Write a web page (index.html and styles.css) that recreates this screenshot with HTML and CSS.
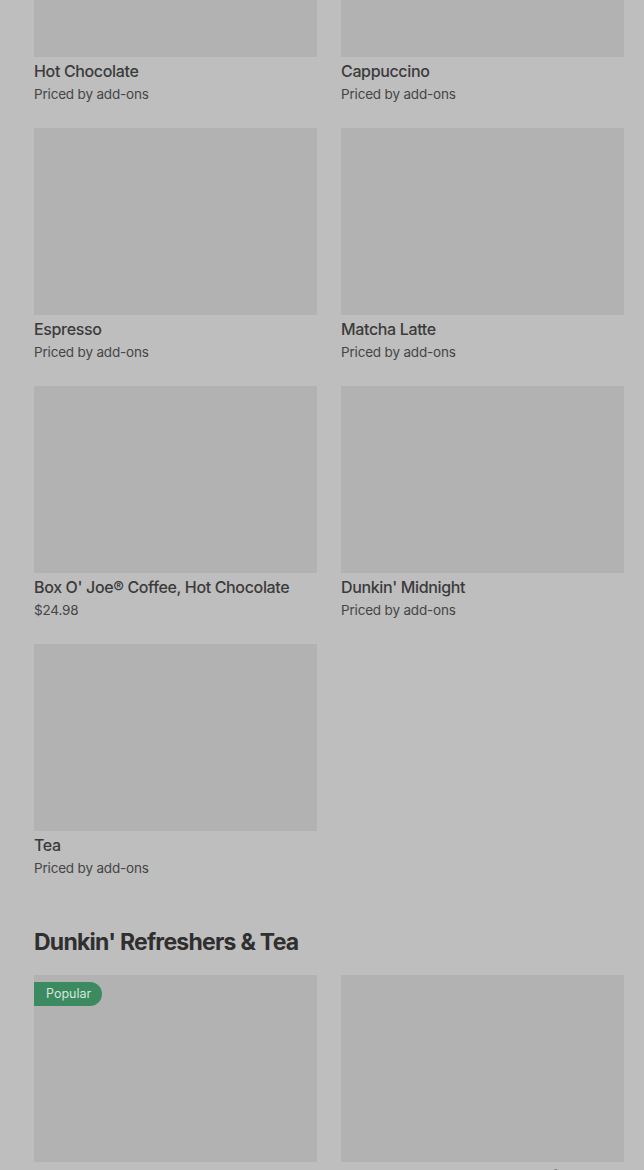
FILE: index.html
```html
<!DOCTYPE html>
<html lang="en">
<head>
<meta charset="utf-8">
<title>Menu</title>
<link rel="stylesheet" href="styles.css">
</head>
<body>
<main class="page">
  <section class="section">
    <div class="grid">
      <div class="card"><div class="thumb"></div><div class="name">Hot Chocolate</div><div class="price">Priced by add-ons</div></div>
      <div class="card"><div class="thumb"></div><div class="name">Cappuccino</div><div class="price">Priced by add-ons</div></div>
      <div class="card"><div class="thumb"></div><div class="name">Espresso</div><div class="price">Priced by add-ons</div></div>
      <div class="card"><div class="thumb"></div><div class="name">Matcha Latte</div><div class="price">Priced by add-ons</div></div>
      <div class="card"><div class="thumb"></div><div class="name">Box O' Joe® Coffee, Hot Chocolate</div><div class="price">$24.98</div></div>
      <div class="card"><div class="thumb"></div><div class="name">Dunkin' Midnight</div><div class="price">Priced by add-ons</div></div>
      <div class="card"><div class="thumb"></div><div class="name">Tea</div><div class="price">Priced by add-ons</div></div>
    </div>
  </section>
  <section class="section">
    <h2 class="heading">Dunkin' Refreshers &amp; Tea</h2>
    <div class="grid">
      <div class="card"><div class="thumb"><span class="badge">Popular</span></div><div class="name">Iced Tea</div><div class="price">Priced by add-ons</div></div>
      <div class="card"><div class="thumb"></div><div class="name">Mango Pineapple Dunkin' Refresher</div><div class="price">Priced by add-ons</div></div>
    </div>
  </section>
</main>
</body>
</html>
```
FILE: styles.css
```css
html, body {
  margin: 0;
  padding: 0;
  background: #bebebe;
  overflow: hidden;
}
body {
  font-family: Inter, "Liberation Sans", sans-serif;
  color: #3a3a3a;
}
.page {
  margin-top: -130px;
  padding: 0 20px 0 34px;
}
.section {
  margin-bottom: 48px;
}
.grid {
  display: grid;
  grid-template-columns: 1fr 1fr;
  column-gap: 24px;
  row-gap: 24px;
}
.card {
  display: flex;
  flex-direction: column;
}
.thumb {
  position: relative;
  height: 187px;
  background: #b2b2b2;
}
.name {
  margin-top: 4px;
  font-size: 16px;
  line-height: 20px;
  font-weight: 500;
  letter-spacing: -0.35px;
  color: #3b3b3b;
}
.price {
  margin-top: 3px;
  font-size: 13.5px;
  line-height: 20px;
  letter-spacing: -0.18px;
  color: #454545;
}
.heading {
  margin: 0 0 17px;
  font-size: 23px;
  line-height: 32px;
  font-weight: 700;
  letter-spacing: -0.75px;
  color: #2f2f2f;
}
.badge {
  position: absolute;
  top: 7px;
  left: 0;
  height: 24px;
  line-height: 24px;
  padding: 0 11px 0 12px;
  background: #3b8a60;
  color: #d7e6dc;
  font-size: 12.5px;
  border-radius: 0 12px 12px 0;
}
```
